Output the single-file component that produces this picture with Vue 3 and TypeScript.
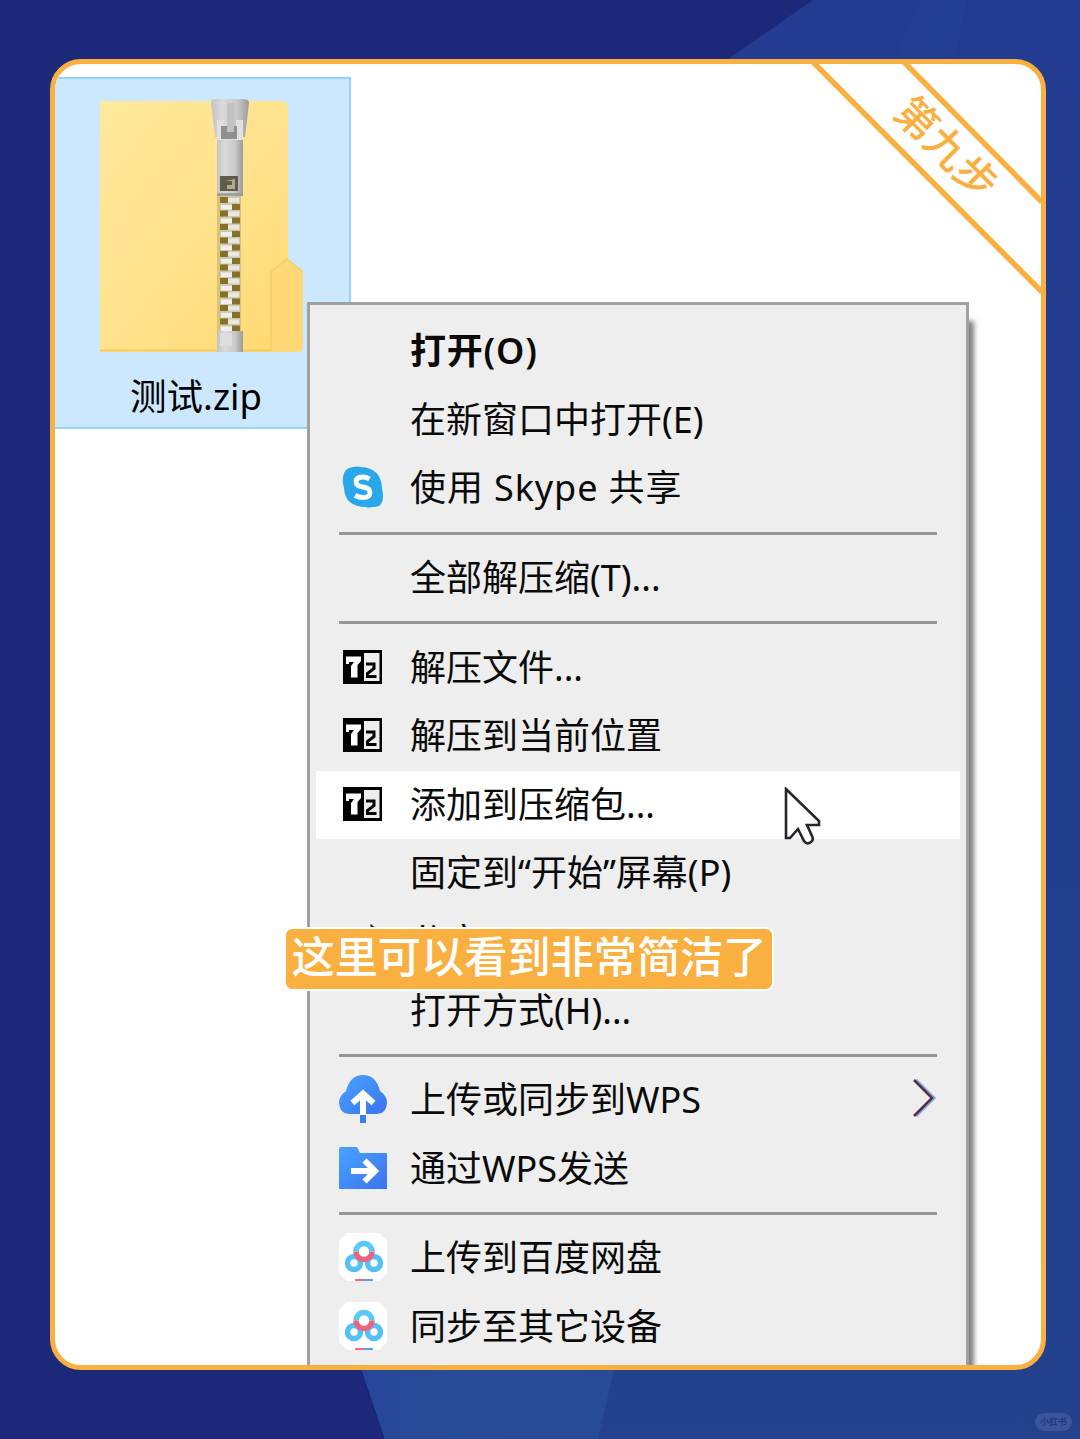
<script setup lang="ts">
interface MenuItem {
  label?: string
  icon?: string
  bold?: boolean
  active?: boolean
  arrow?: boolean
  sep?: boolean
  wide?: boolean
}

const items: MenuItem[] = [
  { label: '打开(O)', bold: true },
  { label: '在新窗口中打开(E)' },
  { label: '使用 Skype 共享', icon: 'skype', wide: true },
  { sep: true },
  { label: '全部解压缩(T)...' },
  { sep: true },
  { label: '解压文件...', icon: 'zip' },
  { label: '解压到当前位置', icon: 'zip' },
  { label: '添加到压缩包...', icon: 'zip', active: true },
  { label: '固定到“开始”屏幕(P)' },
  { label: '分享', icon: 'share' },
  { label: '打开方式(H)...' },
  { sep: true },
  { label: '上传或同步到WPS', icon: 'cloud', arrow: true },
  { label: '通过WPS发送', icon: 'send' },
  { sep: true },
  { label: '上传到百度网盘', icon: 'baidu' },
  { label: '同步至其它设备', icon: 'baidu' },
]

// zipper teeth, one pair per step
const teeth = Array.from({ length: 10 }, (_, i) => 99 + i * 13.5)
</script>

<template>
  <div class="page">
    <svg class="backdrop" viewBox="0 0 1080 1439">
      <defs>
        <linearGradient id="bgRight" x1="0" y1="0" x2="0" y2="1">
          <stop offset="0" stop-color="#233b90" />
          <stop offset="1" stop-color="#24418c" />
        </linearGradient>
        <linearGradient id="bgBottom" x1="0" y1="0" x2="1" y2="0">
          <stop offset="0" stop-color="#26479b" />
          <stop offset="0.4" stop-color="#284d96" />
          <stop offset="1" stop-color="#274b94" />
        </linearGradient>
      </defs>
      <rect width="1080" height="1439" fill="#1c2878" />
      <path d="M813 0H1080V1439H385L362 1370L728 59Z" fill="url(#bgRight)" />
      <path d="M920 0H967L955 60H894Z" fill="#243e94" />
      <path d="M360 1365H615L598 1439H385Z" fill="url(#bgBottom)" />
    </svg>

    <main class="card">
      <section class="file">
        <svg class="folder" width="206" height="258" viewBox="0 0 206 258">
          <defs>
            <linearGradient id="folder" x1="0" y1="0" x2="1" y2="1">
              <stop offset="0" stop-color="#ffe99b" />
              <stop offset="0.5" stop-color="#ffe28d" />
              <stop offset="1" stop-color="#ffd86e" />
            </linearGradient>
            <linearGradient id="metal" x1="0" y1="0" x2="1" y2="0">
              <stop offset="0" stop-color="#c2c2c2" />
              <stop offset="0.3" stop-color="#dadada" />
              <stop offset="0.7" stop-color="#c8c8c8" />
              <stop offset="1" stop-color="#9a9a9a" />
            </linearGradient>
          </defs>
          <path d="M2 3H184Q190 3 190 9V161L205 174V248Q205 254 199 254H2Z" fill="url(#folder)" />
          <path d="M2 252.5H200" stroke="#f6cb62" stroke-width="2" />
          <path d="M173 254V174L189 161L205 174V248Q205 254 199 254Z" fill="#fed877" />
          <path d="M173 253V174L189 161L205 174" fill="none" stroke="#f2cd68" stroke-width="1.5" />
          <rect x="119" y="98" width="24" height="136" fill="#d8c27c" />
          <g v-for="y in teeth" :key="y">
            <rect x="122" :y="y" width="20" height="13.5" fill="#cfc9b2" />
            <rect x="122" :y="y" width="8" height="6" fill="#85712a" />
            <rect x="134" :y="y + 7" width="8" height="6" fill="#85712a" />
            <rect x="130" :y="y + 1" width="11" height="4.5" fill="#e9e7df" />
            <rect x="123" :y="y + 8" width="11" height="4.5" fill="#f0efeb" />
          </g>
          <path d="M113 5Q113 1 118 1H145Q151 1 151 5L147 39H117Z" fill="url(#metal)" />
          <path d="M119 22H145V98H119Z" fill="url(#metal)" />
          <path d="M119 22H126V34H138V22H145V42H119Z" fill="#e0e0e0" />
          <path d="M123 28H139V41H123Z" fill="#8f8f8f" />
          <path d="M129 5H136V34H129Z" fill="#c2c2c2" />
          <path d="M119 96.5H145" stroke="#999" stroke-width="2.5" />
          <path d="M122 78H140V93H122Z" fill="#5f5b4b" />
          <path d="M127 83H134V87H129V91H137V81Z" fill="#b1aa93" />
          <rect x="119" y="233" width="26" height="21" fill="url(#metal)" />
          <rect x="122" y="235" width="12" height="13" fill="#dedede" />
        </svg>
        <span class="filename">测试.zip</span>
      </section>

      <nav class="menu">
        <template v-for="(item, i) in items" :key="i">
          <div v-if="item.sep" class="sep"></div>
          <div v-else class="item" :class="{ active: item.active, bold: item.bold, wide: item.wide }">
            <div class="icon">
              <svg v-if="item.icon === 'skype'" width="42" height="42" viewBox="0 0 42 42">
                <path d="M11 1Q15 0 19 1Q39 2 40 22Q41 27 41 31Q41 42 30 41Q27 42 24 41Q3 41 2 22Q0 16 1 11Q2 2 11 1Z" fill="#28a8ea" />
                <path d="M27.500 13Q24 11 21 11Q14 11 14 16Q14 20 21 21Q28 22 28 26.500Q28 31.500 21 31.500Q17 31.500 13 29.500" fill="none" stroke="#fff" stroke-width="4.8" />
              </svg>
              <svg v-else-if="item.icon === 'zip'" class="zip" width="39" height="34" viewBox="0 0 39 34">
                <path d="M0 0H39V34H0Z" />
                <path d="M21 3H36.500V31H21Z" fill="#eee" />
                <path d="M3 6.500H18V11L14.500 15V27.500H8V16L11 12H6V14H3Z" fill="#fff" />
                <path d="M23 14H31V18.500L24.500 23.500V26.500H33.500" fill="none" stroke="#000" stroke-width="3" />
              </svg>
              <svg v-else-if="item.icon === 'share'" class="share" width="42" height="42" viewBox="0 0 42 42">
                <path d="M30 3L42 13L30 24V17Q18 16 13 28Q14 11 30 9ZM20 11H3V39H36V27" fill="none" stroke="#222" stroke-width="3" />
              </svg>
              <svg v-else-if="item.icon === 'cloud'" width="48" height="50" viewBox="0 0 48 50">
                <defs>
                  <linearGradient id="cloud" x1="0" y1="0" x2="1" y2="1">
                    <stop offset="0" stop-color="#47a4ff" />
                    <stop offset="1" stop-color="#3c72ef" />
                  </linearGradient>
                </defs>
                <path d="M7 17Q11 1 24 1Q37 1 41 17Q48 22 48 29Q47 40 38 40H10Q1 40 0 29Q0 22 7 17Z" fill="url(#cloud)" />
                <path d="M24 41V20M13.500 29L24 19.500L34.500 29" fill="none" stroke="#fff" stroke-width="6" />
                <path d="M21 41H27V49H21Z" fill="#3c7df0" />
              </svg>
              <svg v-else-if="item.icon === 'send'" width="48" height="42" viewBox="0 0 48 42">
                <path d="M0 2Q0 0 2 0H18L21 6H48V42H0Z" fill="url(#cloud)" />
                <path d="M12 24H36M25.500 13.500L36 24L25.500 34.500" fill="none" stroke="#fff" stroke-width="6" />
              </svg>
              <svg v-else-if="item.icon === 'baidu'" width="48" height="48" viewBox="0 0 48 48">
                <path d="M8 0H40L48 8V40L40 48H8L0 40V8Z" fill="#fff" />
                <g fill="none" stroke-width="5.500">
                  <circle cx="15" cy="30" r="6.500" stroke="#55c0f8" />
                  <circle cx="35" cy="30" r="6.500" stroke="#55c0f8" />
                  <path d="M17 18.500A8 8 0 1 1 33 18.500" stroke="#58c9f9" />
                  <path d="M17 18.500A8 8 0 0 0 33 18.500" stroke="#ec6580" />
                </g>
                <path d="M16 46H25V48H16Z" fill="#f06b84" />
                <path d="M25 46H34V48H25Z" fill="#5a9df2" />
              </svg>
            </div>
            <span class="label">{{ item.label }}</span>
            <svg v-if="item.arrow" class="chevron" width="26" height="40" viewBox="0 0 26 40">
              <path d="M4 2L22 20L4 38" fill="none" stroke="#7fa9e6" stroke-width="3" />
              <path d="M2 2L20 20L2 38" fill="none" stroke="#5a303c" stroke-width="2.500" />
            </svg>
          </div>
        </template>
      </nav>

      <svg class="ribbon" width="240" height="240" viewBox="0 0 240 240">
        <path d="M7 -7L241 228M98 -7L241 138" fill="none" stroke="#fab040" stroke-width="5.500" />
      </svg>
      <div class="step">第九步</div>

      <svg class="cursor" width="40" height="60" viewBox="0 0 40 60">
        <path d="M2 2V51L6 51L14 42L20 54Q23 58 27 55Q30 53 28 49L23 38H35V34Z" fill="#fff" stroke="#25252d" stroke-width="2.600" />
      </svg>
    </main>

    <div class="caption">这里可以看到非常简洁了</div>
    <div class="watermark">小红书</div>
  </div>
</template>

<style>
body {
  background: #1c2878;
}
</style>

<style scoped>
.page {
  position: relative;
  box-sizing: border-box;
  width: 1080px;
  height: 1439px;
  padding: 59px 34px 69px 50px;
  overflow: hidden;
  font-family: 'Noto Sans', 'Noto Sans CJK SC', sans-serif;
}

.backdrop {
  position: absolute;
  inset: 0;
  width: 1080px;
  height: 1439px;
}

.card {
  position: relative;
  box-sizing: border-box;
  width: 996px;
  height: 1311px;
  border: 5px solid #fab040;
  border-radius: 31px;
  background: #fff;
  overflow: hidden;
}

.file {
  box-sizing: border-box;
  display: flex;
  flex-direction: column;
  align-items: center;
  width: 296px;
  height: 352px;
  margin-top: 13px;
  padding: 19px 3px 0 0;
  border: 2px solid #99d1ff;
  border-left: 0;
  background: #cce8ff;
}

.filename {
  margin: 14px 9px 0 0;
  font-size: 36.5px;
  line-height: 52px;
}

.menu {
  position: absolute;
  left: 252px;
  top: 238px;
  box-sizing: border-box;
  width: 662px;
  height: 1200px;
  padding: 12px 6px;
  border: 3px solid #a0a0a0;
  background: #eee;
  box-shadow: 6px 18px 5px -1px rgba(0, 0, 0, 0.5);
}

.item {
  display: flex;
  align-items: center;
  height: 68.6px;
  color: #0a0a0a;
}

.item.active {
  background: #fff;
}

.icon {
  display: flex;
  justify-content: center;
  flex: none;
  width: 48px;
  margin: 0 23px 2px 23px;
}

.zip {
  margin-right: 2px;
}

.share {
  margin-top: 8px;
}

.label {
  flex: 1;
  font-size: 36px;
  line-height: 52px;
  white-space: nowrap;
}

.bold .label {
  font-weight: 600;
  letter-spacing: 0.8px;
}

.wide .label {
  letter-spacing: 0.9px;
}

.chevron {
  margin: 0 22px 5px 0;
}

.sep {
  display: flow-root;
  height: 3px;
  margin: 9px 23px;
  background: #969696;
}

.ribbon {
  position: absolute;
  right: 0;
  top: 0;
}

.step {
  position: absolute;
  left: 830px;
  top: 53px;
  width: 124px;
  color: #fab040;
  font-size: 41.5px;
  font-weight: 500;
  line-height: 60px;
  text-align: center;
  white-space: nowrap;
  transform: rotate(45deg);
}

.cursor {
  position: absolute;
  left: 729px;
  top: 723px;
}

.caption {
  position: absolute;
  left: 284px;
  top: 927px;
  box-sizing: border-box;
  width: 490px;
  height: 64px;
  border: 2px solid #fff;
  border-radius: 8px;
  background: #fab040;
  color: #fff;
  font-size: 43.2px;
  font-weight: 500;
  line-height: 56px;
  text-align: center;
  white-space: nowrap;
}

.watermark {
  position: absolute;
  left: 1035px;
  top: 1413px;
  width: 37px;
  height: 18px;
  border-radius: 9px;
  background: #3c549b;
  color: #223a83;
  font-size: 9px;
  font-weight: 700;
  line-height: 18px;
  text-align: center;
}
</style>
